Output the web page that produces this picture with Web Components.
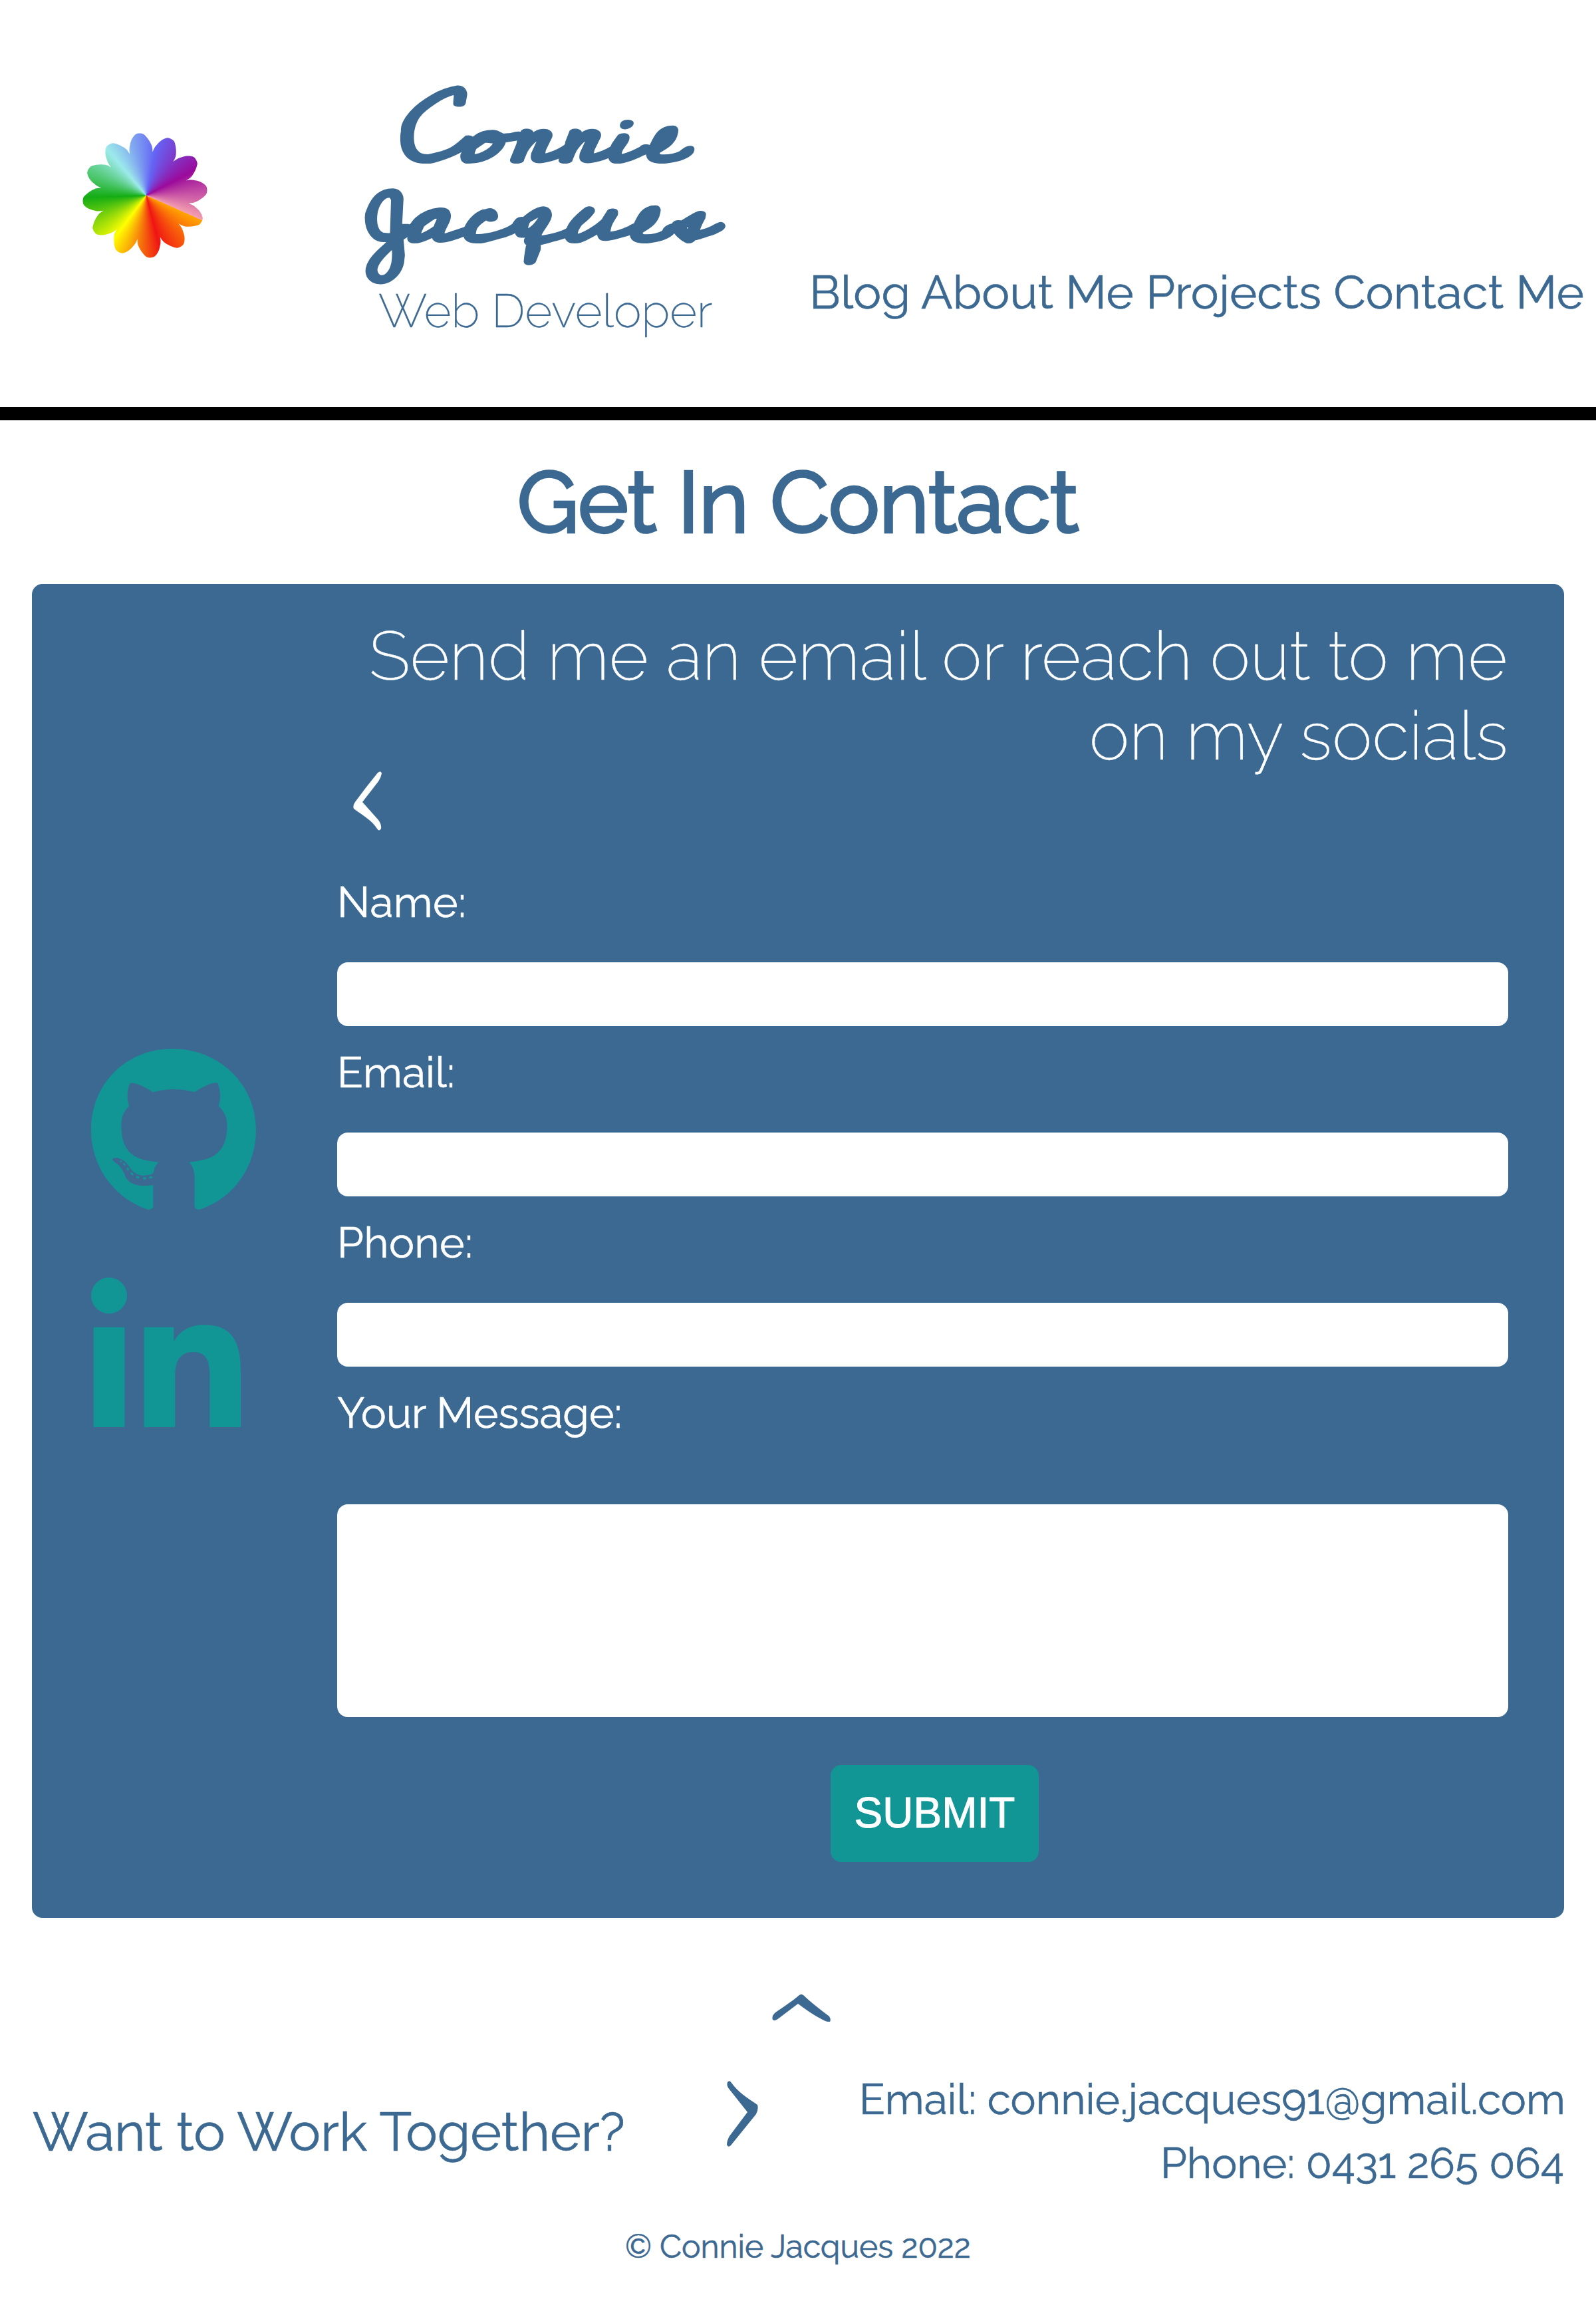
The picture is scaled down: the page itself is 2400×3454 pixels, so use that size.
<!DOCTYPE html>
<html lang="en">
<head>
<meta charset="utf-8">
<title>Connie Jacques - Contact</title>
<style>
  html, body { margin: 0; }
  body { background: #fff; font-family: Raleway, Lato, "Open Sans", sans-serif; color: #3c6992; }
</style>
</head>
<body>
<contact-page></contact-page>
<script>
/* Builds an element class from a shadow-root template string. */
const define = (name, html, ready) => customElements.define(name, class extends HTMLElement {
  connectedCallback() {
    if (this.shadowRoot) return;
    const tpl = document.createElement('template');
    tpl.innerHTML = html;
    this.attachShadow({ mode: 'open' }).append(tpl.content.cloneNode(true));
    if (ready) ready.call(this);
  }
});

/* A single line of text tracked so that its ink fills the given width.
   With the slant attribute the line is stretched and slanted instead. */
define('fit-line', `
  <style>
    :host { display: block; -webkit-text-stroke: .6px currentColor; }
    span { display: block; width: max-content; white-space: nowrap; transform-origin: 0 75%; }
  </style><span></span>`, function () {
  const text = this.getAttribute('text'), width = +this.getAttribute('width');
  const slant = +this.getAttribute('slant') || 0;
  const span = this.shadowRoot.querySelector('span');
  const cs = getComputedStyle(this);
  const ctx = document.createElement('canvas').getContext('2d');
  ctx.font = `${cs.fontStyle} ${cs.fontWeight} ${cs.fontSize} ${cs.fontFamily}`;
  const m = ctx.measureText(text);
  const ink = m.actualBoundingBoxLeft + m.actualBoundingBoxRight;
  span.textContent = text;
  this.style.width = width + 'px';
  if (slant) {
    const k = width / ink;
    span.style.transform = `skewX(${-slant}deg) scaleX(${k})`;
    span.style.marginLeft = m.actualBoundingBoxLeft * k + 'px';
  } else {
    span.style.letterSpacing = (width - ink) / (text.length - 1) + 'px';
    span.style.marginLeft = m.actualBoundingBoxLeft + 'px';
  }
});

/* Twelve-petal flower filled with a rainbow sweep. */
define('flower-logo', `
  <style>
    :host { display: block; width: 192px; height: 192px; }
    div { width: 100%; height: 100%; background: conic-gradient(from 114deg, #ffa500, #f01414, #ffff00, #14ad14, #9ceaea, #6464f5, #9b0a9b, #f5a0b0); }
  </style><div></div>`, function () {
  const petal = [['M',0,0],['L',-14,-50],['C',-17,-57,-19,-70,-16,-77],['C',-14,-86,-9,-91,-6,-93],['C',-3,-94.5,3,-94,6,-92],['C',11,-87,15,-80,17,-73],['C',18,-65,16,-56,14,-50],['Z']];
  let d = '';
  for (let i = 0; i < 12; i++) {
    const r = (i * 30 - 5) * Math.PI / 180, c = Math.cos(r), s = Math.sin(r);
    for (const [cmd, ...p] of petal) {
      d += cmd;
      for (let k = 0; k < p.length; k += 2)
        d += (94 + p[k] * c - p[k + 1] * s).toFixed(2) + ' ' + (96 + p[k] * s + p[k + 1] * c).toFixed(2) + ' ';
    }
  }
  this.shadowRoot.querySelector('div').style.clipPath = `path("${d}")`;
});

define('site-header', `
  <style>
    :host { display: flex; height: 612px; border-bottom: 20px solid #000; }
    flower-logo { margin: 198px 0 0 124px; flex: none; }
    .brand { margin: 147px 0 0 227px; width: 548px; flex: none; }
    .script { font: 400 118px/120px "Homemade Apple", "Cedarville Cursive", Lato, cursive; height: 120px; -webkit-text-stroke: 8px currentColor; }
    .first { margin-left: 57px; }
    .second { margin-left: 4px; }
    .role { font-weight: 200; font-size: 70.4px; line-height: 84px; margin: 38px 0 0 27px; -webkit-text-stroke: .3px currentColor; }
    nav { margin: 397px 0 0 132px; }
    nav fit-line { font-size: 70.4px; line-height: 84px; }
  </style>
  <flower-logo></flower-logo>
  <div class="brand">
    <fit-line class="script first" text="Connie" width="438" slant="10"></fit-line>
    <fit-line class="script second" text="Jacques" width="536" slant="10"></fit-line>
    <fit-line class="role" text="Web Developer" width="501"></fit-line>
  </div>
  <nav><fit-line text="Blog About Me Projects Contact Me" width="1160"></fit-line></nav>`);

define('social-links', `
  <style>
    :host { display: flex; flex-direction: column; gap: 92px; width: 248px; }
    svg { display: block; fill: #119595; }
  </style>
  <svg width="248" height="256" viewBox="0 0 496 512"><path d="M165.9 397.4c0 2-2.3 3.6-5.2 3.6-3.3.3-5.6-1.3-5.6-3.6 0-2 2.3-3.6 5.2-3.6 3-.3 5.6 1.3 5.6 3.6zm-31.1-4.5c-.7 2 1.3 4.3 4.3 4.9 2.6 1 5.6 0 6.2-2s-1.3-4.3-4.3-5.2c-2.6-.7-5.5.3-6.2 2.3zm44.2-1.7c-2.9.7-4.9 2.6-4.6 4.9.3 2 2.9 3.3 5.9 2.6 2.9-.7 4.9-2.6 4.6-4.6-.3-1.9-3-3.2-5.9-2.9zM244.8 8C106.1 8 0 113.3 0 252c0 110.9 69.8 205.8 169.5 239.2 12.8 2.3 17.3-5.6 17.3-12.1 0-6.2-.3-40.4-.3-61.4 0 0-70 15-84.7-29.8 0 0-11.4-29.1-27.8-36.6 0 0-22.9-15.7 1.6-15.4 0 0 24.9 2 38.6 25.8 21.9 38.6 58.6 27.5 72.9 20.9 2.3-16 8.8-27.1 16-33.7-55.9-6.2-112.3-14.3-112.3-110.5 0-27.5 7.6-41.3 23.6-58.9-2.6-6.5-11.1-33.3 2.6-67.9 20.9-6.5 69 27 69 27 20-5.6 41.5-8.5 62.8-8.5s42.8 2.9 62.8 8.5c0 0 48.1-33.6 69-27 13.7 34.7 5.2 61.4 2.6 67.9 16 17.7 25.8 31.5 25.8 58.9 0 96.5-58.9 104.2-114.8 110.5 9.2 7.9 17 22.9 17 46.4 0 33.7-.3 75.4-.3 83.6 0 6.5 4.6 14.4 17.3 12.1C428.2 457.8 496 362.9 496 252 496 113.3 383.5 8 244.8 8zM97.2 352.9c-1.3 1-1 3.3.7 5.2 1.6 1.6 3.9 2.3 5.2 1 1.3-1 1-3.3-.7-5.2-1.6-1.6-3.9-2.3-5.2-1zm-10.8-8.1c-.7 1.3.3 2.9 2.3 3.9 1.6 1 3.6.7 4.3-.7.7-1.3-.3-2.9-2.3-3.9-2-.6-3.6-.3-4.3.7zm32.4 35.6c-1.6 1.3-1 4.3 1.3 6.2 2.3 2.3 5.2 2.6 6.5 1 1.3-1.3.7-4.3-1.3-6.2-2.2-2.3-5.2-2.6-6.5-1zm-11.4-14.7c-1.6 1-1.6 3.6 0 5.9 1.6 2.3 4.3 3.3 5.6 2.3 1.6-1.3 1.6-3.9 0-6.2-1.4-2.3-4-3.3-5.6-2z"/></svg>
  <svg width="225" height="225" viewBox="0 0 448 448"><path d="M100.28 448H7.4V148.9h92.88zM53.79 108.1C24.09 108.1 0 83.5 0 53.8a53.79 53.79 0 0 1 107.58 0c0 29.7-24.1 54.3-53.79 54.3zM447.9 448h-92.68V302.4c0-34.7-.7-79.2-48.29-79.2-48.29 0-55.69 37.7-55.69 76.7V448h-92.78V148.9h89.08v40.8h1.3c12.4-23.5 42.69-48.3 87.88-48.3 94 0 111.28 61.9 111.28 142.3V448z"/></svg>`);

define('form-field', `
  <style>
    :host { display: block; margin-bottom: 30px; }
    ::slotted(fit-line) { height: 80px; margin-bottom: 50px; font-size: 64px; line-height: 80px; }
    input { display: block; box-sizing: border-box; width: 100%; height: 96px; border: 0; border-radius: 16px; background: #fff; padding: 0 16px; }
  </style>
  <slot></slot><input type="text">`);

define('contact-card', `
  <style>
    :host { display: flex; box-sizing: border-box; margin: 0 48px; height: 2006px; border-radius: 16px; background: #3c6992; color: #fff; }
    social-links { margin: 695px 0 0 89px; flex: none; }
    form { margin: 48px 0 0 122px; width: 1761px; flex: none; }
    .lead { font-weight: 200; font-size: 102px; line-height: 120px; height: 120px; -webkit-text-stroke: .4px currentColor; }
    .lead.a { margin-left: 51px; }
    .lead.b { margin-left: 1135px; }
    .back { display: block; margin: -6px 0 68px 24px; }
    form-field fit-line { margin-left: 5px; }
    .msg { font-size: 64px; line-height: 80px; height: 80px; margin-left: 1px; }
    textarea { display: block; box-sizing: border-box; width: 100%; height: 320px; margin: 97px 0 72px; border: 0; border-radius: 16px; background: #fff; resize: none; }
    button { display: block; margin: 0 auto 0 742px; width: 313px; height: 146px; padding: 0 0 2px; border: 0; border-radius: 16px; background: #119595; color: #fff; font: 64px "Liberation Sans", sans-serif; -webkit-text-stroke: 1px #fff; }
  </style>
  <social-links></social-links>
  <form>
    <fit-line class="lead a" text="Send me an email or reach out to me" width="1711"></fit-line>
    <fit-line class="lead b" text="on my socials" width="625"></fit-line>
    <svg class="back" width="43" height="89" viewBox="0 0 43 89" fill="#fff"><path d="M37 2Q42-2 43 3Q42 9 38 15L14 46L38 73Q43 80 42 86Q39 91 36 86C28 73 14 66 1 56Q-1 52 3 46Q19 24 37 2Z"/></svg>
    <form-field><fit-line text="Name:" width="185"></fit-line></form-field>
    <form-field><fit-line text="Email:" width="168"></fit-line></form-field>
    <form-field><fit-line text="Phone:" width="195"></fit-line></form-field>
    <fit-line class="msg" text="Your Message:" width="425"></fit-line>
    <textarea></textarea>
    <button type="button">SUBMIT</button>
  </form>`);

define('site-footer', `
  <style>
    :host { display: block; color: #3c6992; }
    svg { display: block; fill: #3c6992; flex: none; }
    .up { margin: 115px 0 0 1161px; }
    .row { display: flex; height: 304px; }
    .cta { font-size: 80px; line-height: 96px; margin: 118px 0 0 49px; height: 96px; }
    .next { margin: 89px 0 0 150px; }
    .info { display: flex; flex-direction: column; align-items: flex-end; margin: 69px 0 0 auto; padding-right: 50px; }
    .info fit-line { font-size: 64px; line-height: 96px; height: 96px; }
    .copy { font-size: 48px; line-height: 60px; height: 60px; margin: 4px 0 0 942px; }
  </style>
  <svg class="up" width="88" height="41" viewBox="0 0 88 41"><path d="M1 38Q-1 33 4 28C18 18 32 9 41 1Q44-1 47 1C58 12 72 22 86 33Q89 38 87 41Q83 42 76 38C62 31 50 22 39 14L10 36Q4 41 1 38Z"/></svg>
  <div class="row">
    <fit-line class="cta" text="Want to Work Together?" width="894"></fit-line>
    <svg class="next" width="47" height="99" viewBox="0 0 47 99"><path d="M1 2Q4-2 7 3C17 17 30 25 46 36Q48 42 44 50L6 97Q2 101 0 96Q0 90 4 83L31 47L4 13Q-1 7 1 2Z"/></svg>
    <div class="info">
      <fit-line text="Email: connie.jacques91@gmail.com" width="1053"></fit-line>
      <fit-line text="Phone: 0431 265 064" width="600"></fit-line>
    </div>
  </div>
  <fit-line class="copy" text="© Connie Jacques 2022" width="517"></fit-line>`);

define('contact-page', `
  <style>
    :host { display: block; width: 2400px; height: 3454px; overflow: hidden; }
    .title { font-size: 128px; font-weight: 400; line-height: 160px; height: 160px; margin: 43px 0 43px 783px; -webkit-text-stroke: 4.5px currentColor; }
  </style>
  <site-header></site-header>
  <fit-line class="title" text="Get In Contact" width="838"></fit-line>
  <contact-card></contact-card>
  <site-footer></site-footer>`);
</script>
</body>
</html>
